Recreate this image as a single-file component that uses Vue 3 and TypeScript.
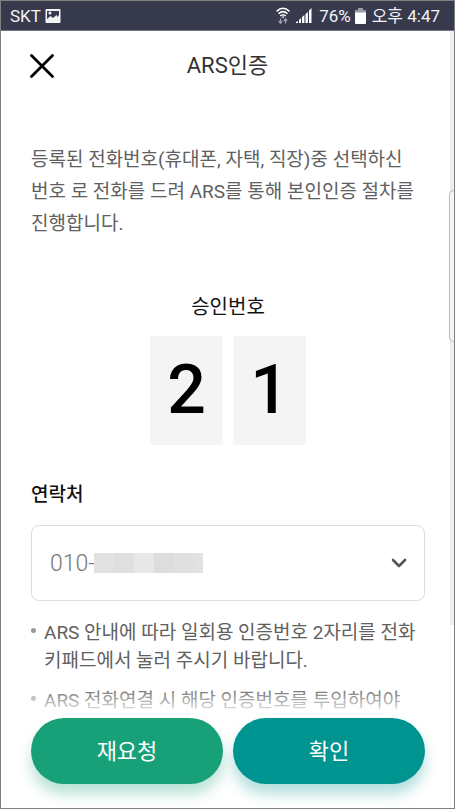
<script setup lang="ts">
import { ref } from 'vue'

const digits: string[] = ['2', '1']
const phone = ref('010-')
const notes: string[] = [
  'ARS 안내에 따라 일회용 인증번호 2자리를 전화 키패드에서 눌러 주시기 바랍니다.',
  'ARS 전화연결 시 해당 인증번호를 투입하여야',
]
const maskTones: string[] = ['#e2e2e2', '#dfdfdf', '#e7e7e7', '#dddddd', '#e0e0e0', '#e2e2e2']
</script>

<template>
  <div class="screen">
    <div class="status">
      <div class="status-group">
        <span>SKT</span>
        <svg width="16" height="16" viewBox="0 0 16 16" aria-hidden="true">
          <path fill="#f3f3f6" fill-rule="evenodd" d="M1.500 1h13a1 1 0 0 1 1 1v12a1 1 0 0 1-1 1h-13a1 1 0 0 1-1-1V2a1 1 0 0 1 1-1zM2 3v8l3.500-3 2.500 2 3.500-3 1 2L14 7V3z" />
          <circle cx="5" cy="5" r="1.500" fill="#f3f3f6" />
        </svg>
      </div>
      <div class="status-group">
        <svg width="14" height="18" viewBox="0 0 14 18" fill="none" aria-hidden="true">
          <path stroke="#fff" stroke-width="1.500" d="M.6 4.400Q7-1.800 13.400 4.400M2.500 6.800Q7 2.400 11.500 6.800M4.300 9Q7 6.400 9.700 9" />
          <path fill="#fff" d="M5.700 9.700Q7 8.700 8.300 9.700L7 11.300z" />
          <path stroke="#a3a4af" stroke-width="1.300" d="M4.500 11.500v4.500M2.800 14.200l1.700 2 1.700-2M9.500 16.500V12M7.800 13.800l1.700-2 1.700 2" />
        </svg>
        <svg class="signal" width="16" height="16" viewBox="0 0 16 16" fill="#fff" aria-hidden="true">
          <path d="M0 15v-1l2-1v2zM3 15v-3l2-2v5zM6 15V9l2.400-2v8zM9.500 15V6l2.400-2v11zM13 15V2.500L15.500 0v15z" />
        </svg>
        <span>76%</span>
        <svg class="battery" width="11" height="16" viewBox="0 0 11 16" aria-hidden="true">
          <path fill="#9a9ba5" d="M3 0h5v2h3v3H0V2h3z" />
          <path fill="#fff" d="M0 4.500h11V15a1 1 0 0 1-1 1H1a1 1 0 0 1-1-1z" />
        </svg>
        <span>오후 4:47</span>
      </div>
    </div>

    <header class="header">
      <button class="close" type="button" aria-label="닫기">
        <svg width="24" height="24" viewBox="0 0 24 24" fill="none" stroke="#000" stroke-width="2.800" stroke-linecap="round" aria-hidden="true">
          <path d="M1.500 1.500l21 21M22.500 1.500l-21 21" />
        </svg>
      </button>
      <h1>ARS인증</h1>
    </header>

    <main class="content">
      <p class="intro">등록된 전화번호(휴대폰, 자택, 직장)중 선택하신 번호 로 전화를 드려 ARS를 통해 본인인증 절차를 진행합니다.</p>

      <section class="code">
        <h2>승인번호</h2>
        <div class="digits">
          <span v-for="(digit, i) in digits" :key="i" class="digit">{{ digit }}</span>
        </div>
      </section>

      <label class="contact-label" for="phone">연락처</label>
      <div class="select-box">
        <select id="phone" v-model="phone">
          <option value="010-">010-</option>
        </select>
        <span class="mask" aria-hidden="true">
          <i v-for="(tone, i) in maskTones" :key="i" :style="{ background: tone }"></i>
        </span>
        <svg class="chevron" width="16" height="10" viewBox="0 0 16 10" fill="none" stroke="#555" stroke-width="2.600" stroke-linecap="round" stroke-linejoin="round" aria-hidden="true">
          <path d="M2 2l6 6 6-6" />
        </svg>
      </div>

      <ul class="notes">
        <li v-for="note in notes" :key="note">{{ note }}</li>
      </ul>
    </main>

    <footer class="actions">
      <button class="retry" type="button">재요청</button>
      <button class="confirm" type="button">확인</button>
    </footer>
    <div class="scroll-track"></div>
    <div class="edge-handle"></div>
  </div>
</template>

<style>
body {
  margin: 0;
}
</style>

<style scoped>
* {
  box-sizing: border-box;
}

.screen {
  position: relative;
  display: flex;
  flex-direction: column;
  height: 100vh;
  overflow: hidden;
  border: 1px solid #808080;
  background: #fff;
  color: #606060;
  font-family: Roboto, "Noto Sans CJK KR", sans-serif;
  font-size: 20px;
  word-break: keep-all;
}

.status {
  display: flex;
  flex: none;
  align-items: center;
  justify-content: space-between;
  height: 30px;
  padding: 0 14px 0 9px;
  border-bottom: 1px solid #77777f;
  background: #37394d;
  color: #f3f3f6;
  font-size: 17px;
  line-height: 28px;
}

.status-group {
  display: flex;
  align-items: center;
  gap: 4px;
}

.signal {
  margin: 0 3px 0 2px;
}

.battery {
  margin-right: 2px;
}

.header {
  display: grid;
  flex: none;
  grid-template-columns: 24px 1fr 24px;
  align-items: center;
  height: 70px;
  padding: 0 29px;
}

.close {
  display: flex;
  padding: 0;
  border: 0;
  background: none;
}

h1,
h2 {
  margin: 0;
  font-weight: 400;
  text-align: center;
}

h1 {
  color: #333;
  font-size: 22px;
  line-height: 32px;
}

.content {
  flex: 1;
  min-height: 0;
  overflow: hidden;
  padding: 43px 29px 0 30px;
}

.intro {
  margin: 0;
  font-size: 19px;
  line-height: 32px;
}

.code {
  padding-top: 51px;
}

h2 {
  color: #111;
  font-size: 20px;
  line-height: 32px;
}

.digits {
  display: flex;
  justify-content: center;
  gap: 10px;
  padding-top: 13px;
}

.digit {
  width: 73px;
  height: 109px;
  border-radius: 3px;
  background: #f4f4f4;
  color: #000;
  font-size: 68px;
  font-weight: 500;
  line-height: 109px;
  text-align: center;
}

.contact-label {
  display: block;
  padding-top: 34px;
  color: #111;
  font-size: 19px;
  font-weight: 500;
  line-height: 32px;
}

.select-box {
  position: relative;
  margin-top: 14px;
}

select {
  display: block;
  width: 100%;
  height: 76px;
  padding: 0 18px;
  border: 1px solid #dcdce4;
  border-radius: 8px;
  appearance: none;
  background: #fff;
  color: #777;
  font-family: inherit;
  font-size: 23px;
  font-weight: 300;
}

.mask {
  position: absolute;
  top: 28px;
  left: 63px;
  display: grid;
  grid-template-columns: repeat(5, 20px) 9px;
  height: 20px;
  pointer-events: none;
}

.chevron {
  position: absolute;
  top: 33px;
  right: 18px;
  pointer-events: none;
}

.notes {
  display: grid;
  gap: 12px;
  margin: 0;
  padding: 18px 0 0;
  font-size: 19px;
  line-height: 28px;
  list-style: none;
}

.notes li {
  display: grid;
  grid-template-columns: 5px 1fr;
  gap: 8px;
}

.notes li::before {
  width: 5px;
  height: 5px;
  margin-top: 9px;
  border-radius: 50%;
  background: #999;
  content: "";
}

.actions {
  position: absolute;
  right: 0;
  bottom: 0;
  left: 0;
  display: grid;
  grid-template-columns: 1fr 1fr;
  gap: 10px;
  padding: 32px 29px 24px 30px;
  background: linear-gradient(rgba(255, 255, 255, 0), #fff 30px);
}

.actions button {
  height: 66px;
  padding: 0 0 4px;
  border: 0;
  border-radius: 33px;
  color: #fff;
  font-family: inherit;
  font-size: 22px;
}

.retry {
  background: #18a078;
  box-shadow: 0 10px 14px rgba(24, 160, 120, 0.3);
}

.confirm {
  background: #009490;
  box-shadow: 0 10px 14px rgba(0, 148, 144, 0.3);
}

.scroll-track {
  position: absolute;
  top: 30px;
  right: 0;
  width: 4px;
  height: 594px;
  background: #eee;
}

.edge-handle {
  position: absolute;
  top: 189px;
  right: 0;
  width: 5px;
  height: 152px;
  border: 1px solid #bbb;
  border-right: 0;
  border-radius: 5px 0 0 5px;
  background: #f5f5f5;
}
</style>
